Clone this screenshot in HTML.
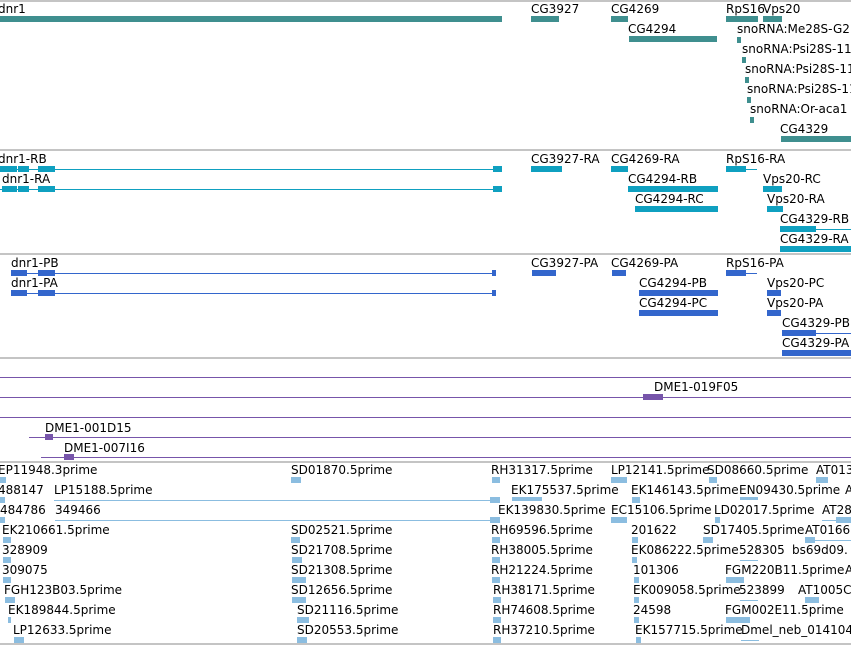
<!DOCTYPE html>
<html><head><meta charset="utf-8"><style>
body{margin:0;width:851px;height:646px;overflow:hidden;background:#fff;position:relative;font-family:"DejaVu Sans","Liberation Sans",sans-serif;}
.t{position:absolute;font-size:12px;line-height:14px;color:#000;white-space:nowrap}
.b{position:absolute;height:6px}
.l{position:absolute;height:1px}
.g{position:absolute;left:0;width:851px;height:2px;background:#c4c4c4}
.T{background:#3f8f8f}.C{background:#0fa0c0}.B{background:#3366cc}.P{background:#7755aa}.E{background:#8bbde0}
</style></head><body>
<div class="g" style="top:0"></div>
<div class="g" style="top:149px"></div>
<div class="g" style="top:253px"></div>
<div class="g" style="top:357px"></div>
<div class="g" style="top:461px"></div>
<div class="g" style="top:643px"></div>

<!-- genes -->
<div class="t" style="left:-2px;top:2px">dnr1</div><div class="b T" style="left:0;top:16px;width:502px"></div>
<div class="t" style="left:531px;top:2px">CG3927</div><div class="b T" style="left:531px;top:16px;width:28px"></div>
<div class="t" style="left:611px;top:2px">CG4269</div><div class="b T" style="left:611px;top:16px;width:17px"></div>
<div class="t" style="left:726px;top:2px">RpS16</div><div class="b T" style="left:726px;top:16px;width:32px"></div>
<div class="t" style="left:763px;top:2px">Vps20</div><div class="b T" style="left:763px;top:16px;width:19px"></div>
<div class="t" style="left:628px;top:22px">CG4294</div><div class="b T" style="left:629px;top:36px;width:88px"></div>
<div class="t" style="left:737px;top:22px">snoRNA:Me28S-G2</div><div class="b T" style="left:737px;top:37px;width:4px"></div>
<div class="t" style="left:742px;top:42px">snoRNA:Psi28S-1153</div><div class="b T" style="left:742px;top:57px;width:4px"></div>
<div class="t" style="left:745px;top:62px">snoRNA:Psi28S-1192</div><div class="b T" style="left:745px;top:77px;width:4px"></div>
<div class="t" style="left:747px;top:82px">snoRNA:Psi28S-1135</div><div class="b T" style="left:747px;top:97px;width:4px"></div>
<div class="t" style="left:750px;top:102px">snoRNA:Or-aca1</div><div class="b T" style="left:750px;top:117px;width:4px"></div>
<div class="t" style="left:780px;top:122px">CG4329</div><div class="b T" style="left:781px;top:136px;width:70px"></div>

<!-- transcripts -->
<div class="t" style="left:-2px;top:152px">dnr1-RB</div><div class="l C" style="left:0;top:169px;width:502px"></div>
<div class="b C" style="left:0;top:166px;width:17px"></div><div class="b C" style="left:18px;top:166px;width:11px"></div><div class="b C" style="left:38px;top:166px;width:17px"></div><div class="b C" style="left:493px;top:166px;width:9px"></div>
<div class="t" style="left:2px;top:172px">dnr1-RA</div><div class="l C" style="left:0;top:189px;width:502px"></div>
<div class="b C" style="left:2px;top:186px;width:15px"></div><div class="b C" style="left:18px;top:186px;width:11px"></div><div class="b C" style="left:38px;top:186px;width:17px"></div><div class="b C" style="left:493px;top:186px;width:9px"></div>
<div class="t" style="left:531px;top:152px">CG3927-RA</div><div class="b C" style="left:531px;top:166px;width:31px"></div>
<div class="t" style="left:611px;top:152px">CG4269-RA</div><div class="b C" style="left:611px;top:166px;width:17px"></div>
<div class="t" style="left:726px;top:152px">RpS16-RA</div><div class="b C" style="left:726px;top:166px;width:20px"></div><div class="l C" style="left:726px;top:169px;width:31px"></div>
<div class="t" style="left:628px;top:172px">CG4294-RB</div><div class="b C" style="left:628px;top:186px;width:90px"></div>
<div class="t" style="left:763px;top:172px">Vps20-RC</div><div class="b C" style="left:763px;top:186px;width:19px"></div>
<div class="t" style="left:635px;top:192px">CG4294-RC</div><div class="b C" style="left:635px;top:206px;width:83px"></div>
<div class="t" style="left:767px;top:192px">Vps20-RA</div><div class="b C" style="left:767px;top:206px;width:16px"></div>
<div class="t" style="left:780px;top:212px">CG4329-RB</div><div class="b C" style="left:780px;top:226px;width:36px"></div><div class="l C" style="left:780px;top:229px;width:71px"></div>
<div class="t" style="left:780px;top:232px">CG4329-RA</div><div class="b C" style="left:780px;top:246px;width:71px"></div>

<!-- proteins -->
<div class="t" style="left:11px;top:256px">dnr1-PB</div><div class="l B" style="left:11px;top:273px;width:485px"></div>
<div class="b B" style="left:11px;top:270px;width:16px"></div><div class="b B" style="left:38px;top:270px;width:17px"></div><div class="b B" style="left:492px;top:270px;width:4px"></div>
<div class="t" style="left:11px;top:276px">dnr1-PA</div><div class="l B" style="left:11px;top:293px;width:485px"></div>
<div class="b B" style="left:11px;top:290px;width:16px"></div><div class="b B" style="left:38px;top:290px;width:17px"></div><div class="b B" style="left:492px;top:290px;width:4px"></div>
<div class="t" style="left:531px;top:256px">CG3927-PA</div><div class="b B" style="left:532px;top:270px;width:24px"></div>
<div class="t" style="left:611px;top:256px">CG4269-PA</div><div class="b B" style="left:612px;top:270px;width:14px"></div>
<div class="t" style="left:726px;top:256px">RpS16-PA</div><div class="b B" style="left:726px;top:270px;width:20px"></div><div class="l B" style="left:726px;top:273px;width:31px"></div>
<div class="t" style="left:639px;top:276px">CG4294-PB</div><div class="b B" style="left:639px;top:290px;width:79px"></div>
<div class="t" style="left:767px;top:276px">Vps20-PC</div><div class="b B" style="left:767px;top:290px;width:14px"></div>
<div class="t" style="left:639px;top:296px">CG4294-PC</div><div class="b B" style="left:639px;top:310px;width:79px"></div>
<div class="t" style="left:767px;top:296px">Vps20-PA</div><div class="b B" style="left:767px;top:310px;width:14px"></div>
<div class="t" style="left:782px;top:316px">CG4329-PB</div><div class="b B" style="left:782px;top:330px;width:34px"></div><div class="l B" style="left:782px;top:333px;width:69px"></div>
<div class="t" style="left:782px;top:336px">CG4329-PA</div><div class="b B" style="left:782px;top:350px;width:69px"></div>

<!-- purple -->
<div class="l P" style="left:0;top:377px;width:851px"></div>
<div class="l P" style="left:0;top:397px;width:851px"></div>
<div class="l P" style="left:0;top:417px;width:851px"></div>
<div class="l P" style="left:29px;top:437px;width:822px"></div>
<div class="l P" style="left:41px;top:457px;width:810px"></div>
<div class="t" style="left:654px;top:380px">DME1-019F05</div><div class="b P" style="left:643px;top:394px;width:20px"></div>
<div class="t" style="left:45px;top:421px">DME1-001D15</div><div class="b P" style="left:45px;top:434px;width:8px"></div>
<div class="t" style="left:64px;top:441px">DME1-007I16</div><div class="b P" style="left:64px;top:454px;width:10px"></div>

<!-- ESTs -->
<div class="t" style="left:-2px;top:463px">EP11948.3prime</div><div class="b E" style="left:0;top:477px;width:6px"></div>
<div class="t" style="left:291px;top:463px">SD01870.5prime</div><div class="b E" style="left:291px;top:477px;width:10px"></div>
<div class="t" style="left:491px;top:463px">RH31317.5prime</div><div class="b E" style="left:492px;top:477px;width:8px"></div>
<div class="t" style="left:611px;top:463px">LP12141.5prime</div><div class="b E" style="left:611px;top:477px;width:16px"></div>
<div class="t" style="left:707px;top:463px">SD08660.5prime</div><div class="b E" style="left:709px;top:477px;width:8px"></div>
<div class="t" style="left:816px;top:463px">AT013</div><div class="b E" style="left:816px;top:477px;width:12px"></div>

<div class="t" style="left:-2px;top:483px">488147</div><div class="b E" style="left:0;top:497px;width:5px"></div>
<div class="t" style="left:54px;top:483px">LP15188.5prime</div><div class="l E" style="left:54px;top:500px;width:446px"></div><div class="b E" style="left:490px;top:497px;width:10px"></div>
<div class="t" style="left:511px;top:483px">EK175537.5prime</div><div class="b E" style="left:512px;top:497px;width:30px;height:4px"></div>
<div class="t" style="left:631px;top:483px">EK146143.5prime</div><div class="b E" style="left:632px;top:497px;width:8px"></div>
<div class="t" style="left:739px;top:483px">EN09430.5prime</div><div class="b E" style="left:740px;top:497px;width:18px;height:3px"></div>
<div class="t" style="left:845px;top:483px">A</div>

<div class="t" style="left:0;top:503px">484786</div><div class="b E" style="left:0;top:517px;width:5px"></div>
<div class="t" style="left:55px;top:503px">349466</div><div class="l E" style="left:55px;top:520px;width:445px"></div><div class="b E" style="left:490px;top:517px;width:10px"></div>
<div class="t" style="left:498px;top:503px">EK139830.5prime</div>
<div class="t" style="left:611px;top:503px">EC15106.5prime</div><div class="b E" style="left:611px;top:517px;width:16px"></div>
<div class="t" style="left:714px;top:503px">LD02017.5prime</div><div class="b E" style="left:715px;top:517px;width:5px"></div>
<div class="t" style="left:822px;top:503px">AT28</div><div class="l E" style="left:822px;top:520px;width:29px"></div><div class="b E" style="left:836px;top:517px;width:15px"></div>

<div class="t" style="left:2px;top:523px">EK210661.5prime</div><div class="b E" style="left:3px;top:537px;width:8px"></div>
<div class="t" style="left:291px;top:523px">SD02521.5prime</div><div class="b E" style="left:291px;top:537px;width:9px"></div>
<div class="t" style="left:491px;top:523px">RH69596.5prime</div><div class="b E" style="left:492px;top:537px;width:8px"></div>
<div class="t" style="left:631px;top:523px">201622</div><div class="b E" style="left:632px;top:537px;width:6px"></div>
<div class="t" style="left:703px;top:523px">SD17405.5prime</div><div class="b E" style="left:703px;top:537px;width:10px"></div>
<div class="t" style="left:805px;top:523px">AT0166</div><div class="l E" style="left:805px;top:540px;width:46px"></div><div class="b E" style="left:805px;top:537px;width:10px"></div>

<div class="t" style="left:2px;top:543px">328909</div><div class="b E" style="left:3px;top:557px;width:8px"></div>
<div class="t" style="left:291px;top:543px">SD21708.5prime</div><div class="b E" style="left:292px;top:557px;width:10px"></div>
<div class="t" style="left:491px;top:543px">RH38005.5prime</div><div class="b E" style="left:492px;top:557px;width:8px"></div>
<div class="t" style="left:631px;top:543px">EK086222.5prime</div><div class="b E" style="left:632px;top:557px;width:5px"></div>
<div class="t" style="left:739px;top:543px">528305</div><div class="l E" style="left:740px;top:560px;width:18px"></div>
<div class="t" style="left:792px;top:543px">bs69d09.</div>

<div class="t" style="left:2px;top:563px">309075</div><div class="b E" style="left:3px;top:577px;width:8px"></div>
<div class="t" style="left:291px;top:563px">SD21308.5prime</div><div class="b E" style="left:292px;top:577px;width:14px"></div>
<div class="t" style="left:491px;top:563px">RH21224.5prime</div><div class="b E" style="left:492px;top:577px;width:8px"></div>
<div class="t" style="left:633px;top:563px">101306</div><div class="b E" style="left:634px;top:577px;width:5px"></div>
<div class="t" style="left:725px;top:563px">FGM220B11.5prime</div><div class="b E" style="left:726px;top:577px;width:18px"></div>
<div class="t" style="left:845px;top:563px">A</div>

<div class="t" style="left:4px;top:583px">FGH123B03.5prime</div><div class="b E" style="left:5px;top:597px;width:10px"></div>
<div class="t" style="left:291px;top:583px">SD12656.5prime</div><div class="b E" style="left:292px;top:597px;width:14px"></div>
<div class="t" style="left:493px;top:583px">RH38171.5prime</div><div class="b E" style="left:493px;top:597px;width:8px"></div>
<div class="t" style="left:633px;top:583px">EK009058.5prime</div><div class="b E" style="left:634px;top:597px;width:5px"></div>
<div class="t" style="left:739px;top:583px">523899</div><div class="l E" style="left:740px;top:600px;width:18px"></div>
<div class="t" style="left:798px;top:583px">AT1005C</div><div class="b E" style="left:805px;top:597px;width:14px"></div>

<div class="t" style="left:8px;top:603px">EK189844.5prime</div><div class="b E" style="left:8px;top:617px;width:3px"></div>
<div class="t" style="left:297px;top:603px">SD21116.5prime</div><div class="b E" style="left:297px;top:617px;width:12px"></div>
<div class="t" style="left:493px;top:603px">RH74608.5prime</div><div class="b E" style="left:493px;top:617px;width:8px"></div>
<div class="t" style="left:633px;top:603px">24598</div><div class="b E" style="left:634px;top:617px;width:5px"></div>
<div class="t" style="left:725px;top:603px">FGM002E11.5prime</div><div class="b E" style="left:726px;top:617px;width:24px"></div>

<div class="t" style="left:13px;top:623px">LP12633.5prime</div><div class="b E" style="left:14px;top:637px;width:10px"></div>
<div class="t" style="left:297px;top:623px">SD20553.5prime</div><div class="b E" style="left:297px;top:637px;width:10px"></div>
<div class="t" style="left:493px;top:623px">RH37210.5prime</div><div class="b E" style="left:493px;top:637px;width:8px"></div>
<div class="t" style="left:635px;top:623px">EK157715.5prime</div><div class="b E" style="left:636px;top:637px;width:5px"></div>
<div class="t" style="left:741px;top:623px">Dmel_neb_014104</div><div class="l E" style="left:741px;top:640px;width:18px"></div>
</body></html>
